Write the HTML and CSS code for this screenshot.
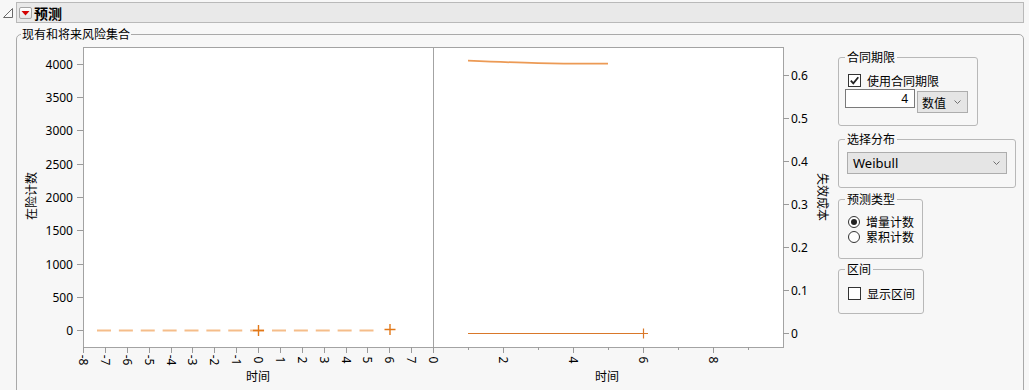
FILE: index.html
```html
<!DOCTYPE html>
<html lang="zh-CN">

<head>
    <meta charset="UTF-8">
    <title>预测</title>
    <link rel="stylesheet" href="styles.css">
</head>

<body>

    <div class="outline-row">
        <svg class="disclosure" viewBox="0 0 10 10" width="10" height="10">
            <polygon points="0.5,9.5 9.5,9.5 9.5,0.5" />
        </svg>
        <div class="outline-bar">
            <span class="menu-btn">
                <svg viewBox="0 0 11 10" width="11" height="10">
                    <polygon points="1.5,3 9.5,3 5.5,7.5" />
                </svg>
            </span>
            <span class="outline-title">预测</span>
        </div>
    </div>

    <fieldset class="report">
        <legend>现有和将来风险集合</legend>
        <div class="report-body">

            <svg class="chart" viewBox="21 42 809 348" width="809" height="348">
                <!-- plot frames -->
                <rect class="frame" x="83.5" y="47.5" width="350" height="300" />
                <rect class="frame" x="433.5" y="47.5" width="350" height="300" />

                <!-- left y axis -->
                <g class="tick">
                    <line x1="77" y1="64.5" x2="83" y2="64.5" />
                    <line x1="77" y1="97.5" x2="83" y2="97.5" />
                    <line x1="77" y1="130.5" x2="83" y2="130.5" />
                    <line x1="77" y1="164.5" x2="83" y2="164.5" />
                    <line x1="77" y1="197.5" x2="83" y2="197.5" />
                    <line x1="77" y1="230.5" x2="83" y2="230.5" />
                    <line x1="77" y1="264.5" x2="83" y2="264.5" />
                    <line x1="77" y1="297.5" x2="83" y2="297.5" />
                    <line x1="77" y1="330.5" x2="83" y2="330.5" />
                </g>
                <g class="y-label-left">
                    <text x="73" y="68.5">4000</text>
                    <text x="73" y="101.5">3500</text>
                    <text x="73" y="134.5">3000</text>
                    <text x="73" y="168.5">2500</text>
                    <text x="73" y="201.5">2000</text>
                    <text x="73" y="234.5">1500</text>
                    <text x="73" y="268.5">1000</text>
                    <text x="73" y="301.5">500</text>
                    <text x="73" y="334.5">0</text>
                </g>
                <text class="axis-title" transform="translate(30 196) rotate(-90)">在险计数</text>

                <!-- right y axis -->
                <g class="tick">
                    <line x1="783" y1="75.5" x2="789" y2="75.5" />
                    <line x1="783" y1="118.5" x2="789" y2="118.5" />
                    <line x1="783" y1="161.5" x2="789" y2="161.5" />
                    <line x1="783" y1="204.5" x2="789" y2="204.5" />
                    <line x1="783" y1="247.5" x2="789" y2="247.5" />
                    <line x1="783" y1="290.5" x2="789" y2="290.5" />
                    <line x1="783" y1="333.5" x2="789" y2="333.5" />
                </g>
                <g class="y-label-right">
                    <text x="791" y="79.5">0.6</text>
                    <text x="791" y="122.5">0.5</text>
                    <text x="791" y="165.5">0.4</text>
                    <text x="791" y="208.5">0.3</text>
                    <text x="791" y="251.5">0.2</text>
                    <text x="791" y="294.5">0.1</text>
                    <text x="791" y="337.5">0</text>
                </g>
                <text class="axis-title" transform="translate(823 197) rotate(90)">失效成本</text>

                <!-- left x axis -->
                <g class="tick">
                    <line x1="83.5" y1="347" x2="83.5" y2="353" />
                    <line x1="105.5" y1="347" x2="105.5" y2="353" />
                    <line x1="127.5" y1="347" x2="127.5" y2="353" />
                    <line x1="149.5" y1="347" x2="149.5" y2="353" />
                    <line x1="171.5" y1="347" x2="171.5" y2="353" />
                    <line x1="192.5" y1="347" x2="192.5" y2="353" />
                    <line x1="214.5" y1="347" x2="214.5" y2="353" />
                    <line x1="236.5" y1="347" x2="236.5" y2="353" />
                    <line x1="258.5" y1="347" x2="258.5" y2="353" />
                    <line x1="280.5" y1="347" x2="280.5" y2="353" />
                    <line x1="302.5" y1="347" x2="302.5" y2="353" />
                    <line x1="324.5" y1="347" x2="324.5" y2="353" />
                    <line x1="346.5" y1="347" x2="346.5" y2="353" />
                    <line x1="367.5" y1="347" x2="367.5" y2="353" />
                    <line x1="389.5" y1="347" x2="389.5" y2="353" />
                    <line x1="411.5" y1="347" x2="411.5" y2="353" />
                    <line x1="433.5" y1="347" x2="433.5" y2="353" />
                </g>
                <g class="x-label">
                    <text transform="translate(83.5 360) rotate(90)">-8</text>
                    <text transform="translate(105.5 360) rotate(90)">-7</text>
                    <text transform="translate(127.5 360) rotate(90)">-6</text>
                    <text transform="translate(149.5 360) rotate(90)">-5</text>
                    <text transform="translate(171.5 360) rotate(90)">-4</text>
                    <text transform="translate(192.5 360) rotate(90)">-3</text>
                    <text transform="translate(214.5 360) rotate(90)">-2</text>
                    <text transform="translate(236.5 360) rotate(90)">-1</text>
                    <text transform="translate(258.5 360) rotate(90)">0</text>
                    <text transform="translate(280.5 360) rotate(90)">1</text>
                    <text transform="translate(302.5 360) rotate(90)">2</text>
                    <text transform="translate(324.5 360) rotate(90)">3</text>
                    <text transform="translate(346.5 360) rotate(90)">4</text>
                    <text transform="translate(367.5 360) rotate(90)">5</text>
                    <text transform="translate(389.5 360) rotate(90)">6</text>
                    <text transform="translate(411.5 360) rotate(90)">7</text>
                </g>
                <text class="axis-title" x="258" y="380.5">时间</text>

                <!-- right x axis -->
                <g class="tick">
                    <line x1="468.5" y1="347" x2="468.5" y2="350" />
                    <line x1="503.5" y1="347" x2="503.5" y2="353" />
                    <line x1="538.5" y1="347" x2="538.5" y2="350" />
                    <line x1="573.5" y1="347" x2="573.5" y2="353" />
                    <line x1="608.5" y1="347" x2="608.5" y2="350" />
                    <line x1="643.5" y1="347" x2="643.5" y2="353" />
                    <line x1="678.5" y1="347" x2="678.5" y2="350" />
                    <line x1="713.5" y1="347" x2="713.5" y2="353" />
                    <line x1="748.5" y1="347" x2="748.5" y2="350" />
                </g>
                <g class="x-label">
                    <text transform="translate(433.5 360) rotate(90)">0</text>
                    <text transform="translate(503.5 360) rotate(90)">2</text>
                    <text transform="translate(573.5 360) rotate(90)">4</text>
                    <text transform="translate(643.5 360) rotate(90)">6</text>
                    <text transform="translate(713.5 360) rotate(90)">8</text>
                </g>
                <text class="axis-title" x="607" y="380.5">时间</text>

                <!-- data -->
                <line class="at-risk" x1="97" y1="330.5" x2="373.5" y2="330.5" />
                <path class="marker" d="M253 330.5h11M258.5 325v11M384.5 329.5h11M390 324v11" />
                <path class="cost-curve" d="M468 60.7 C490 61.6 515 62.6 538 63.1 S590 63.7 608 63.6" />
                <path class="cost-line" d="M468 333.5H648M643.5 328.5v10" />
            </svg>

            <div class="controls">
                <fieldset class="group g-contract">
                    <legend>合同期限</legend>
                    <label class="check-row">
                        <span class="checkbox">
                            <svg viewBox="0 0 11 11" width="11" height="11">
                                <path d="M1.8 5.6 L4.3 8.3 L9.3 2.2" />
                            </svg>
                        </span>
                        使用合同期限
                    </label>
                    <div class="num-row">
                        <span class="num-box">4</span>
                        <span class="dropdown">数值
                            <svg class="chevron" viewBox="0 0 7 4" width="7" height="4">
                                <path d="M0.5 0.5 L3.5 3.5 L6.5 0.5" />
                            </svg>
                        </span>
                    </div>
                </fieldset>

                <fieldset class="group g-dist">
                    <legend>选择分布</legend>
                    <span class="select-wide">Weibull
                        <svg class="chevron" viewBox="0 0 7 4" width="7" height="4">
                            <path d="M0.5 0.5 L3.5 3.5 L6.5 0.5" />
                        </svg>
                    </span>
                </fieldset>

                <fieldset class="group g-type">
                    <legend>预测类型</legend>
                    <label class="radio-row"><span class="radio checked"></span>增量计数</label>
                    <label class="radio-row"><span class="radio"></span>累积计数</label>
                </fieldset>

                <fieldset class="group g-interval">
                    <legend>区间</legend>
                    <label class="check-row"><span class="checkbox"></span>显示区间</label>
                </fieldset>
            </div>

        </div>
    </fieldset>

</body>

</html>
```

FILE: styles.css
```css
body {
    margin: 0;
    background-color: #f7f7f7;
    font-family: "Noto Sans", "Noto Sans CJK SC", sans-serif;
    font-size: 12px;
    color: #000;
    overflow: hidden;
}

/* outline header */
.outline-row {
    display: flex;
    align-items: flex-start;
    padding: 2px 5px 0 3px;
}

.disclosure {
    margin-top: 6px;
    margin-right: 3px;
    flex: none;
}

.disclosure polygon {
    fill: #fafafa;
    stroke: #6a6a6a;
    stroke-width: 1;
}

.outline-bar {
    flex: 1;
    height: 21px;
    box-sizing: border-box;
    display: flex;
    align-items: center;
    padding-left: 2px;
    border: 1px solid #b9b9b9;
    background-color: #e9e9e9;
}

.menu-btn {
    width: 13px;
    height: 12px;
    box-sizing: border-box;
    display: flex;
    align-items: center;
    justify-content: center;
    border: 1px solid #a5a5a5;
    border-radius: 2px;
    background: linear-gradient(#ffffff, #e4e4e4);
}

.menu-btn polygon {
    fill: #d40000;
}

.outline-title {
    margin-left: 2px;
    font-family: "Noto Sans CJK SC", sans-serif;
    font-size: 14px;
    font-weight: bold;
    line-height: 16px;
}

/* report box */
.report {
    margin: 3px 5px 0 16px;
    padding: 0 0 20px 4px;
    min-width: 0;
    border: 1px solid #a9a9a9;
    border-radius: 5px;
}

.report > legend {
    padding: 0 1px;
    line-height: 16px;
    font-family: "Noto Sans CJK SC", sans-serif;
}

.report-body {
    display: flex;
    align-items: flex-start;
}

.chart {
    display: block;
    flex: none;
}

.chart text {
    font-family: "Noto Sans", "Noto Sans CJK SC", sans-serif;
    font-size: 12px;
    fill: #000;
}

.frame {
    fill: #fff;
    stroke: #a3a3a3;
}

.tick line {
    stroke: #9a9a9a;
}

.y-label-left text {
    text-anchor: end;
}

.x-label text {
    text-anchor: middle;
    dominant-baseline: central;
}

.chart .axis-title {
    font-family: "Noto Sans CJK SC", sans-serif;
    text-anchor: middle;
    dominant-baseline: central;
}

.chart text.axis-title[x] {
    dominant-baseline: auto;
}

.at-risk {
    stroke: #f5bd8a;
    stroke-width: 2;
    stroke-dasharray: 14 7.875;
}

.marker {
    fill: none;
    stroke: #e27818;
    stroke-width: 1.4;
}

.cost-curve {
    fill: none;
    stroke: #ec9a55;
    stroke-width: 1.8;
}

.cost-line {
    fill: none;
    stroke: #d9782a;
    stroke-width: 1.2;
}

/* controls */
.controls {
    margin-left: 8px;
    display: flex;
    flex-direction: column;
    align-items: flex-start;
    font-family: "Noto Sans CJK SC", sans-serif;
}

.group {
    margin: 0;
    padding: 0 0 0 6px;
    min-width: 0;
    box-sizing: border-box;
    border: 1px solid #b8b8b8;
    border-radius: 3px;
}

.group legend {
    padding: 0 2px;
    line-height: 16px;
}

.g-contract {
    margin-top: 7px;
    width: 140px;
    padding-top: 7px;
    padding-bottom: 12px;
}

.g-dist {
    margin-top: 5px;
    width: 178px;
    padding-top: 5px;
    padding-bottom: 13px;
}

.g-type {
    margin-top: 3px;
    width: 85px;
    padding-top: 7px;
    padding-bottom: 14px;
}

.g-interval {
    margin-top: 2px;
    width: 86px;
    padding-top: 8px;
    padding-bottom: 12px;
}

.check-row {
    display: flex;
    align-items: center;
    gap: 6px;
    height: 16px;
    margin-left: 3px;
}

.checkbox {
    width: 13px;
    height: 13px;
    box-sizing: border-box;
    display: flex;
    align-items: center;
    justify-content: center;
    border: 1px solid #333;
    background-color: #fff;
}

.checkbox path {
    fill: none;
    stroke: #222;
    stroke-width: 1.8;
}

.num-row {
    display: flex;
    align-items: flex-start;
    gap: 2px;
    margin-top: 1px;
}

.num-box {
    width: 70px;
    height: 19px;
    box-sizing: border-box;
    padding-right: 6px;
    border: 1px solid #7a7a7a;
    background-color: #fff;
    text-align: right;
    line-height: 17px;
    font-family: "Noto Sans", sans-serif;
}

.dropdown,
.select-wide {
    height: 22px;
    box-sizing: border-box;
    display: flex;
    align-items: center;
    justify-content: space-between;
    padding: 0 6px 0 4px;
    border: 1px solid #adadad;
    background-color: #e5e5e5;
}

.dropdown {
    width: 51px;
    margin-top: 2px;
}

.select-wide {
    width: 160px;
    margin-left: 2px;
    padding-left: 5px;
    font-family: "Noto Sans", sans-serif;
    font-size: 13px;
}

.chevron path {
    fill: none;
    stroke: #707070;
    stroke-width: 1;
}

.radio-row {
    display: flex;
    align-items: center;
    gap: 6px;
    height: 15px;
    margin-left: 3px;
}

.radio {
    width: 12px;
    height: 12px;
    box-sizing: border-box;
    display: flex;
    align-items: center;
    justify-content: center;
    border: 1px solid #333;
    border-radius: 50%;
    background-color: #fff;
}

.radio.checked::after {
    content: "";
    width: 6px;
    height: 6px;
    border-radius: 50%;
    background-color: #222;
}
```
